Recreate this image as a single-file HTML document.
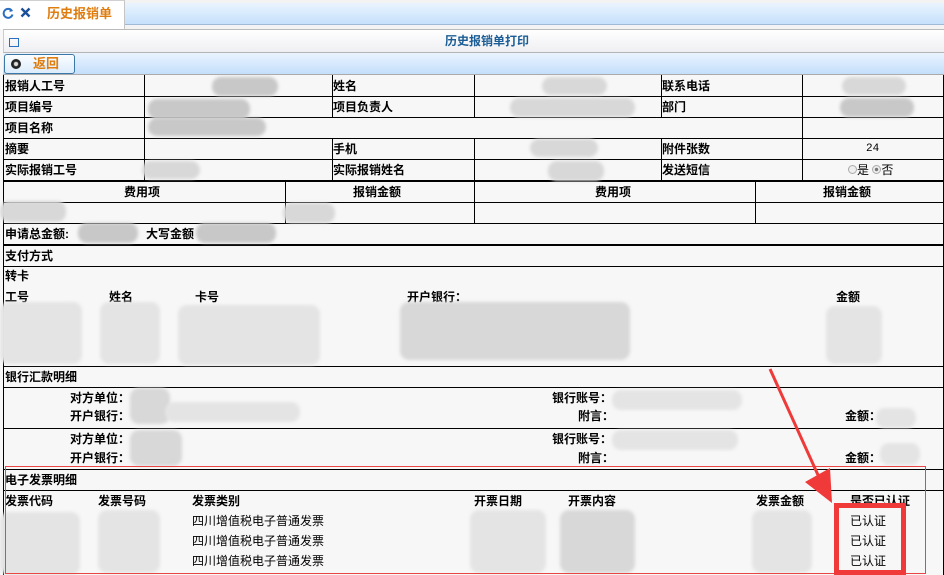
<!DOCTYPE html>
<html><head><meta charset="utf-8">
<style>
*{margin:0;padding:0;box-sizing:border-box}
body{width:944px;height:575px;overflow:hidden;background:#f7f7f7;font-family:"Liberation Sans","Noto Sans CJK SC","WenQuanYi Zen Hei",sans-serif;font-size:12px;line-height:13px;color:#000;position:relative}
.a{position:absolute;white-space:nowrap}
.b{font-weight:bold}
.h{position:absolute;height:1px;background:#000}
.v{position:absolute;width:1px;background:#000}
.bl{position:absolute;background:#d8d8d8;border-radius:9px;filter:blur(1.5px)}
.d{background:#c8c8c8}
.l{background:#e4e4e4}
</style></head><body>
<div class="a" style="left:0;top:0;width:944px;height:29px;background:#f3f3f3"></div>
<div class="a" style="left:124px;top:3px;width:820px;height:22px;background:linear-gradient(#eaf4ff,#c6e0fb);border-bottom:1px solid #9fbad6"></div>
<div class="a" style="left:0;top:0;width:125px;height:29px;background:#fff;border-right:1px solid #c5c5c5;border-top:1px solid #d0d0d0"></div>
<svg class="a" style="left:2px;top:7px" width="12" height="12" viewBox="0 0 12 12"><path d="M10 4A4.5 4.5 0 1 0 10.5 7.5" fill="none" stroke="#2a6fc0" stroke-width="2"/><path d="M8 1L11 4L7.5 5Z" fill="#2a6fc0"/></svg>
<svg class="a" style="left:20px;top:7px" width="11" height="11" viewBox="0 0 11 11"><path d="M1.5 1.5L9.5 9.5M9.5 1.5L1.5 9.5" stroke="#1a4f9a" stroke-width="2.4"/></svg>
<div class="a b" style="left:47px;top:7px;font-size:13px;color:#e07d10">历史报销单</div>
<div class="a" style="left:3px;top:29px;width:941px;height:24px;background:linear-gradient(#fff,#efeff3);border-top:1px solid #bbb;border-bottom:1px solid #b5b5b5;border-left:1px solid #ccc"></div>
<div class="a" style="left:9px;top:38px;width:10px;height:9px;border:1px solid #2a6fc0"></div>
<div class="a b" style="left:445px;top:35px;color:#1b5d94">历史报销单打印</div>
<div class="a" style="left:3px;top:53px;width:941px;height:22px;background:linear-gradient(#eaf4ff,#c4dffb);border-bottom:1px solid #aaa"></div>
<div class="a" style="left:4px;top:54px;width:71px;height:20px;border:1px solid #3b77a8;border-radius:3px;background:linear-gradient(#fbfdff,#dcecfb)"></div>
<div class="a" style="left:11px;top:59px;width:10px;height:10px;border-radius:50%;background:#444;border:2px solid #222"></div>
<div class="a" style="left:14px;top:62px;width:4px;height:4px;border-radius:50%;background:#ddd"></div>
<div class="a b" style="left:33px;top:57px;font-size:13px;color:#e07d10">返回</div>

<div class="v" style="left:3px;top:75px;height:500px"></div>
<div class="v" style="left:943px;top:75px;height:500px"></div>
<div class="h" style="left:3px;top:96px;width:941px"></div>
<div class="h" style="left:3px;top:117px;width:941px"></div>
<div class="h" style="left:3px;top:138px;width:941px"></div>
<div class="h" style="left:3px;top:159px;width:941px"></div>
<div class="h" style="left:3px;top:180px;width:941px;height:2px"></div>
<div class="v" style="left:144px;top:75px;height:105px"></div>
<div class="v" style="left:332px;top:75px;height:42px"></div>
<div class="v" style="left:332px;top:138px;height:42px"></div>
<div class="v" style="left:474px;top:75px;height:42px"></div>
<div class="v" style="left:474px;top:138px;height:42px"></div>
<div class="v" style="left:661px;top:75px;height:42px"></div>
<div class="v" style="left:661px;top:138px;height:42px"></div>
<div class="v" style="left:802px;top:75px;height:105px"></div>
<div class="h" style="left:3px;top:202px;width:941px"></div>
<div class="h" style="left:3px;top:223px;width:941px"></div>
<div class="v" style="left:285px;top:181px;height:42px"></div>
<div class="v" style="left:474px;top:181px;height:42px"></div>
<div class="v" style="left:755px;top:181px;height:42px"></div>
<div class="h" style="left:3px;top:244px;width:941px;height:2px"></div>
<div class="h" style="left:3px;top:266px;width:941px"></div>
<div class="h" style="left:3px;top:366px;width:941px"></div>
<div class="h" style="left:3px;top:387px;width:941px"></div>
<div class="h" style="left:3px;top:428px;width:941px"></div>
<div class="h" style="left:3px;top:469px;width:941px"></div>
<div class="h" style="left:3px;top:490px;width:941px"></div>

<div class="a b" style="left:5px;top:80px">报销人工号</div>
<div class="a b" style="left:333px;top:80px">姓名</div>
<div class="a b" style="left:662px;top:80px">联系电话</div>
<div class="a b" style="left:5px;top:101px">项目编号</div>
<div class="a b" style="left:333px;top:101px">项目负责人</div>
<div class="a b" style="left:662px;top:101px">部门</div>
<div class="a b" style="left:5px;top:122px">项目名称</div>
<div class="a b" style="left:5px;top:143px">摘要</div>
<div class="a b" style="left:333px;top:143px">手机</div>
<div class="a b" style="left:662px;top:143px">附件张数</div>
<div class="a" style="left:866px;top:143px;font-size:11px;font-family:'Liberation Mono',monospace">24</div>
<div class="a b" style="left:5px;top:164px">实际报销工号</div>
<div class="a b" style="left:333px;top:164px">实际报销姓名</div>
<div class="a b" style="left:662px;top:164px">发送短信</div>
<div class="a" style="left:848px;top:164px"><span style="display:inline-block;width:9px;height:9px;border:1px solid #aaa;border-radius:50%;background:#eee"></span>是 <span style="display:inline-block;width:9px;height:9px;border:1px solid #aaa;border-radius:50%;background:radial-gradient(#777 30%,#eee 40%)"></span>否</div>
<div class="a b" style="left:124px;top:186px">费用项</div>
<div class="a b" style="left:353px;top:186px">报销金额</div>
<div class="a b" style="left:595px;top:186px">费用项</div>
<div class="a b" style="left:823px;top:186px">报销金额</div>
<div class="a b" style="left:5px;top:228px">申请总金额:</div>
<div class="a b" style="left:146px;top:228px">大写金额</div>
<div class="a b" style="left:5px;top:250px">支付方式</div>
<div class="a b" style="left:5px;top:270px">转卡</div>
<div class="a b" style="left:5px;top:291px">工号</div>
<div class="a b" style="left:109px;top:291px">姓名</div>
<div class="a b" style="left:195px;top:291px">卡号</div>
<div class="a b" style="left:407px;top:291px">开户银行：</div>
<div class="a b" style="left:836px;top:291px">金额</div>
<div class="a b" style="left:5px;top:371px">银行汇款明细</div>
<div class="a b" style="left:70px;top:392px">对方单位：</div>
<div class="a b" style="left:552px;top:392px">银行账号：</div>
<div class="a b" style="left:70px;top:410px">开户银行：</div>
<div class="a b" style="left:578px;top:410px">附言：</div>
<div class="a b" style="left:845px;top:410px">金额：</div>
<div class="a b" style="left:70px;top:433px">对方单位：</div>
<div class="a b" style="left:552px;top:433px">银行账号：</div>
<div class="a b" style="left:70px;top:452px">开户银行：</div>
<div class="a b" style="left:578px;top:452px">附言：</div>
<div class="a b" style="left:845px;top:452px">金额：</div>
<div class="a b" style="left:5px;top:474px">电子发票明细</div>
<div class="a b" style="left:5px;top:495px">发票代码</div>
<div class="a b" style="left:98px;top:495px">发票号码</div>
<div class="a b" style="left:192px;top:495px">发票类别</div>
<div class="a b" style="left:474px;top:495px">开票日期</div>
<div class="a b" style="left:568px;top:495px">开票内容</div>
<div class="a b" style="left:756px;top:495px">发票金额</div>
<div class="a b" style="left:850px;top:495px">是否已认证</div>
<div class="a" style="left:192px;top:515px">四川增值税电子普通发票</div>
<div class="a" style="left:192px;top:535px">四川增值税电子普通发票</div>
<div class="a" style="left:192px;top:555px">四川增值税电子普通发票</div>
<div class="a" style="left:850px;top:515px">已认证</div>
<div class="a" style="left:850px;top:535px">已认证</div>
<div class="a" style="left:850px;top:555px">已认证</div>

<div class="bl d" style="left:212px;top:77px;width:66px;height:19px"></div>
<div class="bl" style="left:542px;top:77px;width:65px;height:18px"></div>
<div class="bl" style="left:842px;top:77px;width:64px;height:18px"></div>
<div class="bl d" style="left:148px;top:99px;width:102px;height:20px"></div>
<div class="bl" style="left:510px;top:98px;width:125px;height:19px"></div>
<div class="bl d" style="left:840px;top:98px;width:74px;height:19px"></div>
<div class="bl d" style="left:148px;top:118px;width:118px;height:18px"></div>
<div class="bl" style="left:530px;top:139px;width:68px;height:18px"></div>
<div class="bl" style="left:142px;top:161px;width:58px;height:18px"></div>
<div class="bl" style="left:548px;top:161px;width:56px;height:20px"></div>
<div class="bl" style="left:0;top:201px;width:66px;height:21px"></div>
<div class="bl" style="left:283px;top:203px;width:52px;height:20px"></div>
<div class="bl d" style="left:78px;top:223px;width:60px;height:20px"></div>
<div class="bl d" style="left:196px;top:223px;width:80px;height:20px"></div>
<div class="bl l" style="left:0;top:302px;width:82px;height:62px"></div>
<div class="bl l" style="left:100px;top:302px;width:60px;height:62px"></div>
<div class="bl l" style="left:178px;top:305px;width:142px;height:60px"></div>
<div class="bl" style="left:400px;top:302px;width:230px;height:58px"></div>
<div class="bl l" style="left:826px;top:306px;width:56px;height:58px"></div>
<div class="bl" style="left:130px;top:388px;width:40px;height:36px"></div>
<div class="bl l" style="left:165px;top:402px;width:135px;height:20px"></div>
<div class="bl l" style="left:612px;top:390px;width:130px;height:20px"></div>
<div class="bl l" style="left:876px;top:408px;width:40px;height:20px"></div>
<div class="bl" style="left:130px;top:430px;width:52px;height:36px"></div>
<div class="bl l" style="left:612px;top:430px;width:126px;height:20px"></div>
<div class="bl l" style="left:880px;top:443px;width:40px;height:22px"></div>
<div class="bl l" style="left:0;top:512px;width:80px;height:63px"></div>
<div class="bl l" style="left:98px;top:510px;width:62px;height:63px"></div>
<div class="bl l" style="left:470px;top:510px;width:76px;height:63px"></div>
<div class="bl" style="left:560px;top:510px;width:75px;height:63px"></div>
<div class="bl l" style="left:752px;top:510px;width:60px;height:63px"></div>

<div class="a" style="left:5px;top:466px;width:921px;height:108px;border:1px solid #e84545"></div>
<div class="a" style="left:834px;top:503px;width:72px;height:72px;border:5px solid #f03a3a"></div>
<svg class="a" style="left:0;top:0" width="944" height="575"><path d="M770 369L818 475" stroke="#f03a3a" stroke-width="3"/><path d="M805 482L832 503L830 468Z" fill="#f03a3a"/></svg>
</body></html>
